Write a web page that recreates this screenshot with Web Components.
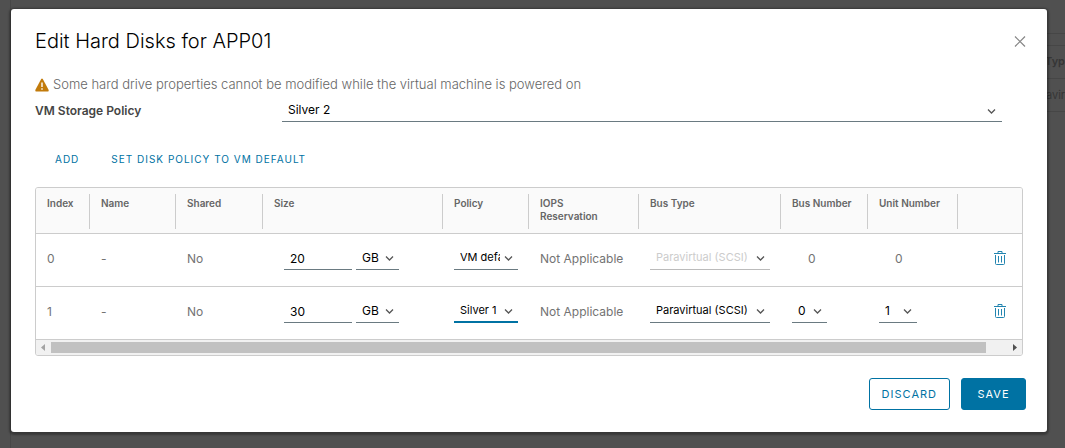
<!DOCTYPE html>
<html lang="en">
<head>
<meta charset="utf-8">
<title>Edit Hard Disks</title>
<style>
  html, body { margin: 0; min-height: 100%; }
  body {
    background: #505050;
    font-family: Inter, "Open Sans", "Liberation Sans", sans-serif;
    font-size: 12px;
    color: #737373;
    overflow: hidden;
  }
</style>
</head>
<body>
<page-backdrop></page-backdrop>
<modal-dialog heading="Edit Hard Disks for APP01">
  <alert-line>Some hard drive properties cannot be modified while the virtual machine is powered on</alert-line>
  <policy-row></policy-row>
  <grid-actions></grid-actions>
  <disk-grid></disk-grid>
  <action-button slot="footer" label="Discard"></action-button>
  <action-button slot="footer" label="Save" primary></action-button>
</modal-dialog>

<script>
class BaseElement extends HTMLElement {
  connectedCallback() {
    if (this.shadowRoot) return;
    this.attachShadow({ mode: 'open' }).innerHTML = this.render();
  }
}

customElements.define('page-backdrop', class extends BaseElement {
  render() {
    return `<style>
      :host { position: absolute; inset: 0; z-index: -1; overflow: hidden; display: flex; justify-content: space-between; color: #363636; font-size: 11px; }
      .nav { width: 10px; border-right: 1px solid #474747; }
      .list { width: 18px; padding-top: 33px; }
      .list div { box-sizing: border-box; display: flex; justify-content: flex-end; border-top: 1px solid #464646; }
      .bar { height: 12px; }
      .head { height: 33px; line-height: 30px; font-weight: 600; }
      .row { height: 33px; line-height: 33px; }
    </style>
    <div class="nav"></div>
    <div class="list"><div class="bar"></div><div class="head">Typ</div><div class="row">avir</div><div></div></div>`;
  }
});

customElements.define('modal-dialog', class extends BaseElement {
  render() {
    return `<style>
      :host { display: block; margin: 9px 18px 16px 11px; padding: 18px 24px 22px; background: #fff; border-radius: 3px; box-shadow: 0 1px 2px 2px rgba(0,0,0,.3); }
      header { display: flex; justify-content: space-between; align-items: center; height: 28px; margin-bottom: 18px; }
      h1 { margin: 0; font-size: 20px; line-height: 28px; font-weight: 300; color: #000; }
      button { border: 0; padding: 0; margin-right: -5px; width: 16px; height: 16px; background: none; }
      svg { display: block; }
      footer { display: flex; justify-content: flex-end; gap: 11px; margin-top: 22px; margin-right: -3px; }
    </style>
    <header><h1>${this.getAttribute('heading')}</h1>
      <button type="button" aria-label="Close"><svg width="16" height="16" viewBox="0 0 16 16"><path d="M3 3.500L13 13.500M13 3.500L3 13.500" stroke="#858585" stroke-width="1.200" fill="none"/></svg></button>
    </header>
    <slot></slot>
    <footer><slot name="footer"></slot></footer>`;
  }
});

customElements.define('alert-line', class extends BaseElement {
  render() {
    return `<style>
      :host { display: flex; align-items: center; gap: 4px; height: 22px; font-size: 13px; font-weight: 300; color: #666; }
      svg { flex: none; margin-top: 2px; }
    </style>
    <svg width="14" height="14" viewBox="0 0 14 14" aria-hidden="true"><path d="M6.200 1Q7 0 7.800 1L13.700 12Q14 13.500 12.800 13.500H1.200Q0 13.500 .3 12Z" fill="#c27b0b"/><path d="M7 4.500V9M7 10.300V11.700" stroke="#fff" stroke-width="1.400"/></svg>
    <span><slot></slot></span>`;
  }
});

/* Borderless drop-down with an underline and a chevron. */
const selectStyles = `
  .select { position: relative; display: block; }
  select { appearance: none; box-sizing: border-box; display: block; width: 100%; height: 24px; margin: 0; padding: 0 18px 1px 6px; border: 0; border-bottom: 1px solid #6a7a81; border-radius: 0; background: none; font: inherit; font-size: 12px; color: #000; outline: none; text-overflow: clip; overflow: hidden; white-space: nowrap; }
  select:disabled { color: #ccc; border-color: #bbb; opacity: 1; }
  select.focus { border-bottom: 2px solid #0072a3; padding-bottom: 0; }
  .compact select { font-size: 11px; }
  .select svg { position: absolute; right: 5px; top: 9px; pointer-events: none; }
`;
const select = (value, attrs = '') => `<span class="select"><select ${attrs}><option>${value}</option></select><svg width="9" height="7" viewBox="0 0 9 7" aria-hidden="true"><path d="M1 1.500L4.500 5L8 1.500" fill="none" stroke="#565656" stroke-width="1.300"/></svg></span>`;

customElements.define('policy-row', class extends BaseElement {
  render() {
    return `<style>${selectStyles}
      :host { display: grid; grid-template-columns: 247px 1fr; align-items: center; height: 30px; margin-right: 21px; }
      label { font-size: 12px; font-weight: 600; color: #454545; }
      .select svg { right: 6px; top: 10px; }
    </style>
    <label for="policy">VM Storage Policy</label>${select('Silver 2', 'id="policy"')}`;
  }
});

customElements.define('grid-actions', class extends BaseElement {
  render() {
    return `<style>
      :host { display: flex; gap: 32px; padding: 22px 20px 16px; }
      button { border: 0; padding: 0; background: none; height: 24px; font: inherit; font-size: 10px; letter-spacing: 1px; text-transform: uppercase; color: #0072a3; }
    </style>
    <button type="button">Add</button><button type="button">Set disk policy to VM default</button>`;
  }
});

customElements.define('action-button', class extends BaseElement {
  render() {
    return `<style>
      :host { display: block; }
      button { box-sizing: border-box; height: 32px; min-width: 65px; padding: 0 12px; border: 1px solid #0072a3; border-radius: 3px; background: #fff; color: #0072a3; font: inherit; font-size: 11px; letter-spacing: 1px; text-transform: uppercase; }
      :host([primary]) button { background: #0072a3; color: #fff; }
    </style>
    <button type="button">${this.getAttribute('label')}</button>`;
  }
});

customElements.define('scroll-track', class extends BaseElement {
  render() {
    return `<style>
      :host { display: flex; align-items: center; height: 15px; background: #f1f1f1; }
      .thumb { flex: 1; height: 11px; background: #c1c1c1; margin-right: 21px; }
      svg { flex: none; }
    </style>
    <svg width="15" height="15" viewBox="0 0 15 15"><path d="M9 4V11L5 7.500Z" fill="#a3a3a3"/></svg>
    <div class="thumb"></div>
    <svg width="15" height="15" viewBox="0 0 15 15"><path d="M6 4V11L10 7.500Z" fill="#505050"/></svg>`;
  }
});

const disks = [
  { index: 0, size: 20, policy: 'VM default', locked: true, bus: 0, unit: 0 },
  { index: 1, size: 30, policy: 'Silver 1', focus: true, bus: 0, unit: 1 }
];

customElements.define('disk-grid', class extends BaseElement {
  render() {
    const widths = [54, 86, 87, 180, 86, 110, 142, 87, 90];
    const heads = ['Index', 'Name', 'Shared', 'Size', 'Policy', 'IOPS<br>Reservation', 'Bus Type', 'Bus Number', 'Unit Number', ''];
    const trash = `<svg width="12" height="14" viewBox="0 0 12 14" aria-hidden="true"><path d="M0 2.500H12M4 2.500V.5H8V2.500M1.500 4V12.500Q1.500 13.500 2.500 13.500H9.500Q10.500 13.500 10.500 12.500V4M4.500 5V11.500M7.500 5V11.500" fill="none" stroke="#2385b0"/></svg>`;
    const row = d => `<tr>
      <td>${d.index}</td><td>-</td><td>No</td>
      <td class="control"><div class="size"><input type="text" value="${d.size}" aria-label="Size of disk ${d.index}">${select('GB', `aria-label="Size unit of disk ${d.index}"`)}</div></td>
      <td class="control compact">${select(d.policy, `aria-label="Policy of disk ${d.index}" ${d.focus ? 'class="focus"' : ''}`)}</td>
      <td>Not Applicable</td>
      <td class="control compact">${select('Paravirtual (SCSI)', `aria-label="Bus type of disk ${d.index}" ${d.locked ? 'disabled' : ''}`)}</td>
      ${d.locked ? `<td class="inset">${d.bus}</td><td class="inset">${d.unit}</td>`
        : `<td class="control short">${select(d.bus, `aria-label="Bus number of disk ${d.index}"`)}</td><td class="control short">${select(d.unit, `aria-label="Unit number of disk ${d.index}"`)}</td>`}
      <td class="remove"><button type="button" aria-label="Remove disk ${d.index}">${trash}</button></td>
    </tr>`;
    return `<style>${selectStyles}
      :host { display: block; border: 1px solid #ccc; border-radius: 3px; overflow: hidden; }
      table { width: 100%; table-layout: fixed; border-collapse: separate; border-spacing: 0; }
      th { box-sizing: border-box; height: 46px; padding: 6px 0 4px; background: #fafafa; border-bottom: 1px solid #ccc; text-align: left; vertical-align: top; font-size: 10px; line-height: 13px; font-weight: 600; color: #666; }
      th div { box-sizing: border-box; height: 35px; padding: 3px 11px 0; border-right: 1px solid #ccc; }
      th:last-child div { border: 0; }
      td { box-sizing: border-box; height: 53px; padding: 12px 11px 0; border-bottom: 1px solid #ccc; vertical-align: top; font-size: 12px; line-height: 26px; white-space: nowrap; }
      td.control { line-height: normal; }
      td.inset { padding-left: 27px; }
      td.short { padding-right: 41px; }
      .size { display: grid; grid-template-columns: 68px 43px; gap: 4px; margin-left: 10px; }
      input { box-sizing: border-box; width: 100%; height: 24px; margin: 0; padding: 1px 6px 0; border: 0; border-bottom: 1px solid #6a7a81; background: none; font: inherit; font-size: 12px; color: #000; outline: none; }
      td.remove { text-align: right; padding-right: 16px; }
      td button { border: 0; padding: 0; background: none; height: 24px; vertical-align: top; }
      td svg { display: block; }
    </style>
    <table>
      <colgroup>${widths.map(w => `<col style="width:${w}px">`).join('')}<col></colgroup>
      <thead><tr>${heads.map(h => `<th scope="col"><div>${h}</div></th>`).join('')}</tr></thead>
      <tbody>${disks.map(row).join('')}</tbody>
    </table>
    <scroll-track></scroll-track>`;
  }
});
</script>
</body>
</html>
